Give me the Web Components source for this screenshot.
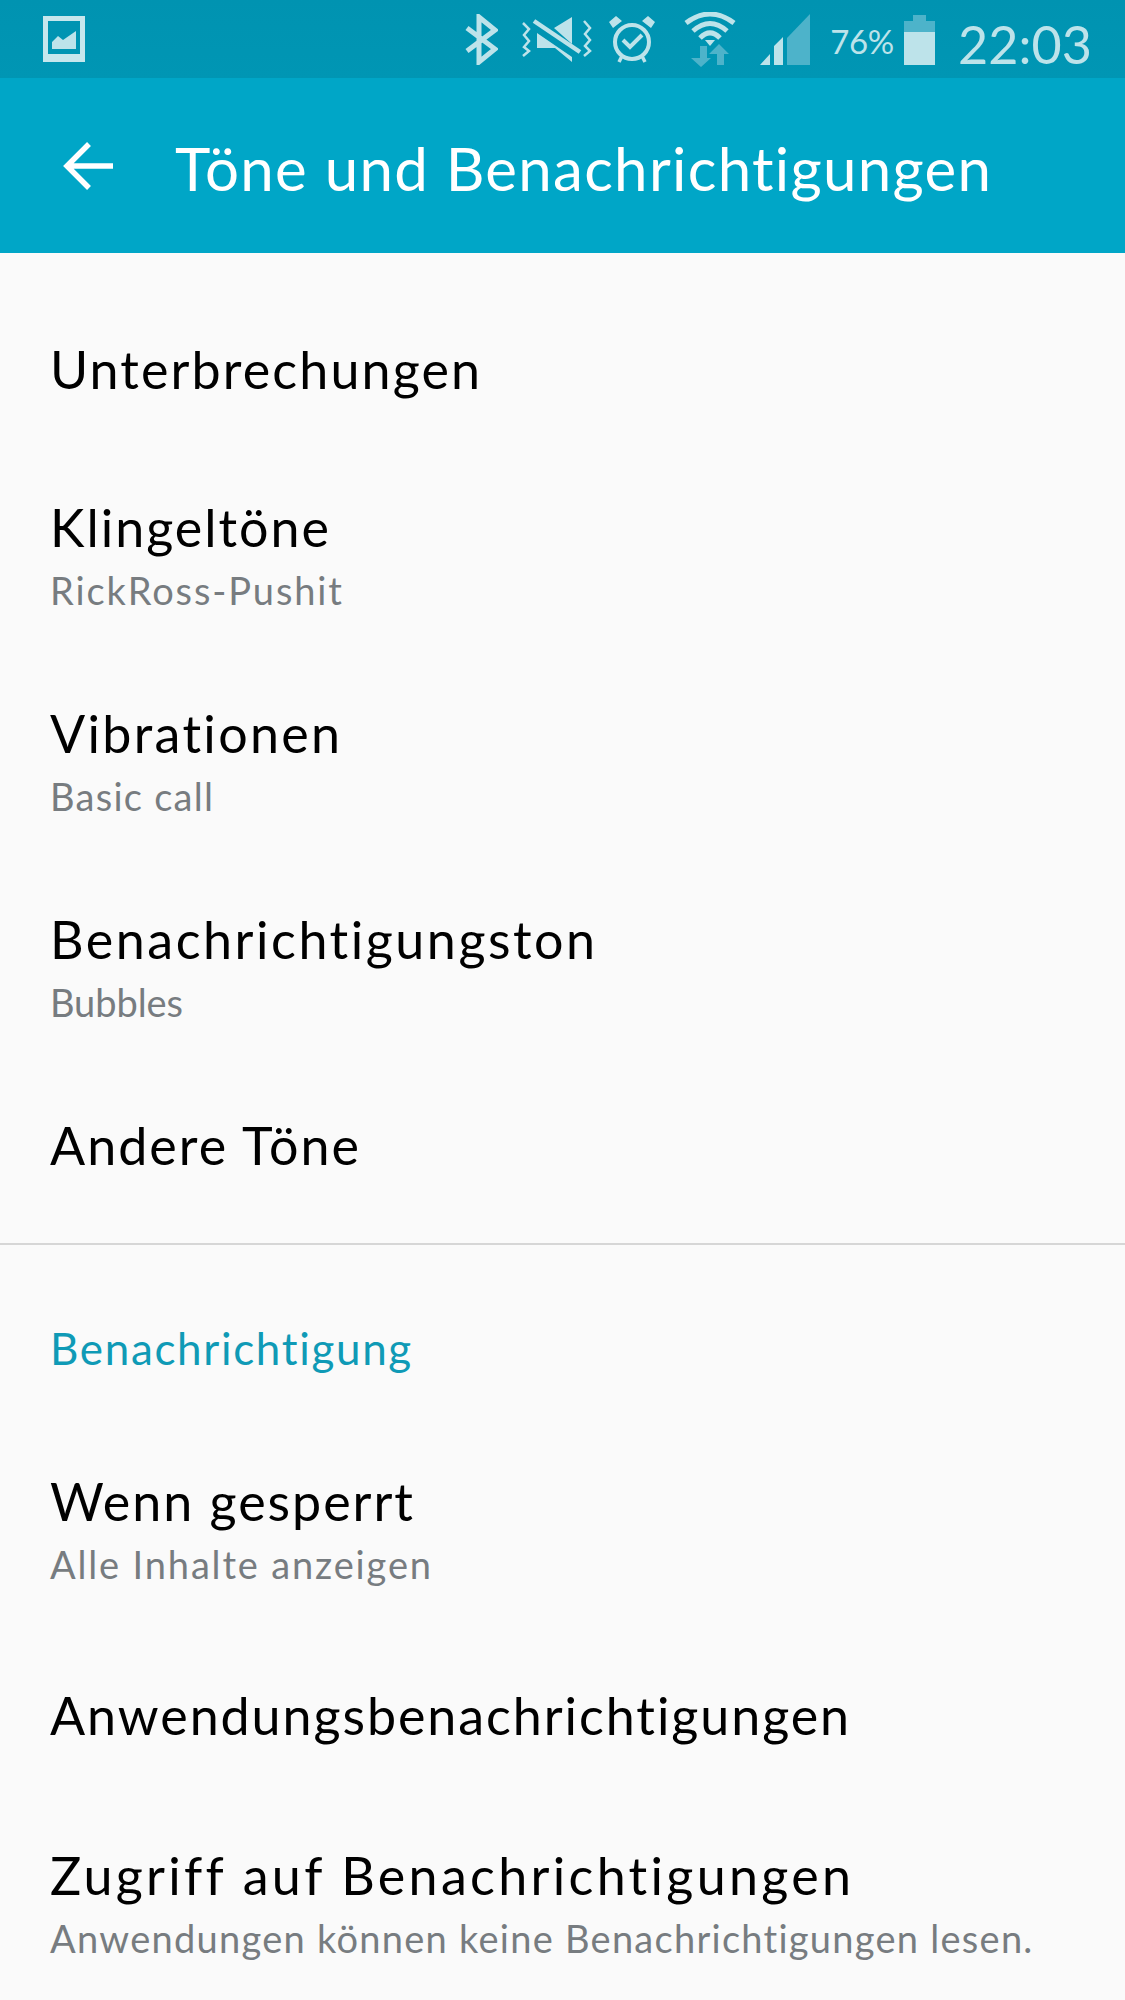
<!DOCTYPE html>
<html lang="de">
<head>
<meta charset="utf-8">
<title>Töne und Benachrichtigungen</title>
<style>
  html, body { margin: 0; background: #fafafa; }
  body { width: 1125px; height: 2000px; overflow: hidden; font-family: "Lato", "Noto Sans", sans-serif; }
</style>
</head>
<body>
<status-bar></status-bar>
<app-bar>Töne und Benachrichtigungen</app-bar>
<main-list>
  <list-row size="164" tw="430">Unterbrechungen</list-row>
  <list-row size="206" tw="279" sw="292" sub="RickRoss-Pushit">Klingeltöne</list-row>
  <list-row size="206" tw="291" sw="163" sub="Basic call">Vibrationen</list-row>
  <list-row size="206" tw="546" sw="133" sub="Bubbles">Benachrichtigungston</list-row>
  <list-row size="151" tw="309">Andere Töne</list-row>
  <list-divider></list-divider>
  <list-heading tw="362">Benachrichtigung</list-heading>
  <list-row size="206" tw="363" sw="381" sub="Alle Inhalte anzeigen">Wenn gesperrt</list-row>
  <list-row size="168" tw="800">Anwendungsbenachrichtigungen</list-row>
  <list-row size="206" tw="800" sw="983" sub="Anwendungen können keine Benachrichtigungen lesen.">Zugriff auf Benachrichtigungen</list-row>
</main-list>
<script>
// stretch a text span so its last glyph ends at the design width
function fitWidth(el, w, text) {
  const r = el.getBoundingClientRect().width;
  if (r > 0 && text.length > 1) el.style.letterSpacing = ((w - r) / (text.length - 1)) + 'px';
}

class StatusBar extends HTMLElement {
  connectedCallback() {
    this.attachShadow({ mode: 'open' });
    this.shadowRoot.innerHTML = `
      <style>
        :host { display: flex; align-items: center; height: 78px; background: linear-gradient(#0093b1, #0096b4); color: #bde3ea; padding: 0 33px 0 43px; box-sizing: border-box; }
        svg { display: block; flex: none; }
        .icons { margin-left: auto; display: flex; align-items: center; }
        .pct { font-size: 33px; margin-left: 20px; padding-top: 4px; }
        .time { font-size: 52px; margin-left: 23px; padding-top: 10px; }
        .bat { margin-left: 10px; margin-top: 2px; }
      </style>
      <svg width="42" height="46" viewBox="0 0 42 46">
        <path fill="#c6e7ed" fill-rule="evenodd" d="M0 0h42v46H0zM5 5v33h32V5z"/>
        <path fill="#bde3ea" d="M9 33v-7l6-6 5 4 13-9v18z"/>
      </svg>
      <div class="icons">
        <svg width="34" height="51" viewBox="0 0 34 51" fill="none" stroke="#bde3ea" stroke-width="5"><path d="M3 14l28 21-16 13V3l16 13L3 37"/></svg>
        <svg width="71" height="45" viewBox="0 0 71 45" style="margin-left:23px">
          <g fill="#bde3ea">
            <path d="M33 11L51 0v27zM16 16l35 24v5L34 31H16z"/>
          </g>
          <path d="M13 4l46 31" stroke="#bde3ea" stroke-width="4.5"/>
          <path d="M2 6l6 6-5 6 5 6-5 6 5 4-6 5M63 4l6 7-5 6 5 6-5 6 5 5-6 5" fill="none" stroke="#bde3ea" stroke-width="2.5"/>
        </svg>
        <svg width="46" height="49" viewBox="0 0 46 49" style="margin-left:17px" fill="none" stroke="#bde3ea" stroke-width="4">
          <circle cx="23" cy="27" r="17"/><path d="M14 25l7 7 12-12"/>
          <path d="M0 7l7-6 6 5-9 7zM46 7l-7-6-6 5 9 7z" fill="#bde3ea" stroke="none"/>
          <path d="M13 41l-3 6M33 41l3 6" stroke-width="3.5"/>
        </svg>
        <svg width="52" height="55" viewBox="0 0 52 55" style="margin-left:29px">
          <g fill="none" stroke="#bde3ea" stroke-width="5"><path d="M2 11Q26-7 50 11"/><path d="M9 19Q26 4 43 19"/><path d="M16 26Q26 16 36 26"/></g>
          <path fill="#bde3ea" d="M21 28h10l-5 6z"/>
          <path fill="#4db3ca" d="M16 34h7v12h4l-10 9-10-9h9zM35 32l10 10h-5v11h-7V42h-8z"/>
        </svg>
        <svg width="50" height="51" viewBox="0 0 50 51" style="margin-left:24px">
          <path fill="#4db3ca" d="M27 51V24L50 0v51z"/>
          <path fill="#bde3ea" d="M14 51V32l9-9v28zM0 51l10-11v11z"/>
        </svg>
        <span class="pct">76%</span>
        <svg class="bat" width="31" height="50" viewBox="0 0 31 50"><path fill="#4db3ca" d="M9 0h13v6h9v11H0V6h9z"/><path fill="#bde3ea" d="M0 17h31v33H0z"/></svg>
        <span class="time">22:03</span>
      </div>`;
    fitWidth(this.shadowRoot.querySelector('.pct'), 64, '76%');
    fitWidth(this.shadowRoot.querySelector('.time'), 134, '22:03');
  }
}

class AppBar extends HTMLElement {
  connectedCallback() {
    this.attachShadow({ mode: 'open' });
    this.shadowRoot.innerHTML = `
      <style>
        :host { display: flex; align-items: center; height: 175px; background: #00a6c7; color: #fff; padding: 0 0 0 63px; box-sizing: border-box; }
        svg { flex: none; }
        .t { font-size: 60px; margin-left: 62px; padding-top: 5px; white-space: nowrap; }
      </style>
      <svg width="50" height="50" viewBox="0 0 50 50" fill="none" stroke="#fff" stroke-width="5.5"><path d="M50 25H4M26 3L4 25l22 22"/></svg>
      <span class="t"><slot></slot></span>`;
    fitWidth(this.shadowRoot.querySelector('.t'), 817, this.textContent);
  }
}

class MainList extends HTMLElement {
  connectedCallback() {
    this.attachShadow({ mode: 'open' });
    this.shadowRoot.innerHTML = `
      <style>:host { display: block; padding-top: 34px; background: #fafafa; }</style>
      <slot></slot>`;
  }
}

class ListRow extends HTMLElement {
  connectedCallback() {
    this.attachShadow({ mode: 'open' });
    const sub = this.getAttribute('sub');
    this.shadowRoot.innerHTML = `
      <style>
        :host { display: flex; flex-direction: column; justify-content: center; height: ${this.getAttribute('size')}px; padding-left: 50px; box-sizing: border-box; }
        .t { font-size: 52px; line-height: 60px; color: #000; white-space: nowrap; align-self: flex-start; }
        .s { font-size: 38px; line-height: 44px; color: #777c80; margin-top: 11px; white-space: nowrap; align-self: flex-start; }
      </style>
      <span class="t"><slot></slot></span>
      ${sub ? `<span class="s">${sub}</span>` : ''}`;
    fitWidth(this.shadowRoot.querySelector('.t'), +this.getAttribute('tw'), this.textContent);
    const s = this.shadowRoot.querySelector('.s');
    if (s) fitWidth(s, +this.getAttribute('sw'), sub);
  }
}

class ListDivider extends HTMLElement {
  connectedCallback() {
    this.attachShadow({ mode: 'open' });
    this.shadowRoot.innerHTML = `<style>:host { display: block; height: 2px; background: #d6d6d6; margin-top: 23px; }</style>`;
  }
}

class ListHeading extends HTMLElement {
  connectedCallback() {
    this.attachShadow({ mode: 'open' });
    this.shadowRoot.innerHTML = `
      <style>
        :host { display: flex; align-items: center; height: 154px; margin-top: 26px; padding-left: 50px; box-sizing: border-box; }
        .t { font-size: 44px; color: #0f9ab6; white-space: nowrap; }
      </style>
      <span class="t"><slot></slot></span>`;
    fitWidth(this.shadowRoot.querySelector('.t'), +this.getAttribute('tw'), this.textContent);
  }
}

customElements.define('status-bar', StatusBar);
customElements.define('app-bar', AppBar);
customElements.define('main-list', MainList);
customElements.define('list-row', ListRow);
customElements.define('list-divider', ListDivider);
customElements.define('list-heading', ListHeading);
</script>
</body>
</html>
